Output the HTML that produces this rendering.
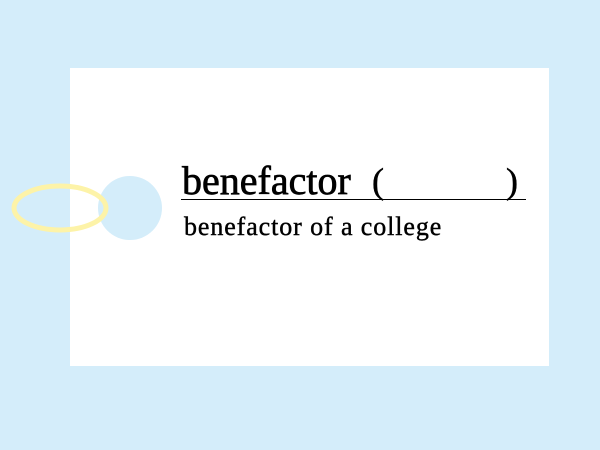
<!DOCTYPE html>
<html><head><meta charset="utf-8"><style>
html,body{margin:0;padding:0;}
body{width:600px;height:450px;background:#d4edfa;position:relative;overflow:hidden;font-family:"Liberation Serif",serif;}
.card{position:absolute;left:70px;top:68px;width:479px;height:298px;background:#fff;}
.circ{position:absolute;left:98px;top:176px;width:64px;height:64px;border-radius:50%;background:#d4edfa;}
svg{position:absolute;left:0;top:0;}
.t1{position:absolute;left:182px;top:161px;font-size:40px;color:#000;line-height:40px;white-space:nowrap;-webkit-text-stroke:0.7px #000;}
.ul{position:absolute;left:181px;top:199px;width:345px;height:1px;background:#000;}
.p{position:absolute;top:161px;font-size:36px;line-height:40px;-webkit-text-stroke:0.5px #000;}
.t2{position:absolute;left:184px;top:212px;font-size:26px;line-height:30px;letter-spacing:0.9px;white-space:nowrap;-webkit-text-stroke:0.4px #000;}
</style></head><body>
<div class="card"></div>
<div class="circ"></div>
<svg width="600" height="450"><ellipse cx="60" cy="208" rx="46" ry="22" fill="none" stroke="#fdf3a8" stroke-width="5"/></svg>
<div class="t1">benefactor</div>
<div class="p" style="left:372px">(</div>
<div class="p" style="left:506px">)</div>
<div class="ul"></div>
<div class="t2">benefactor of a college</div>
</body></html>
